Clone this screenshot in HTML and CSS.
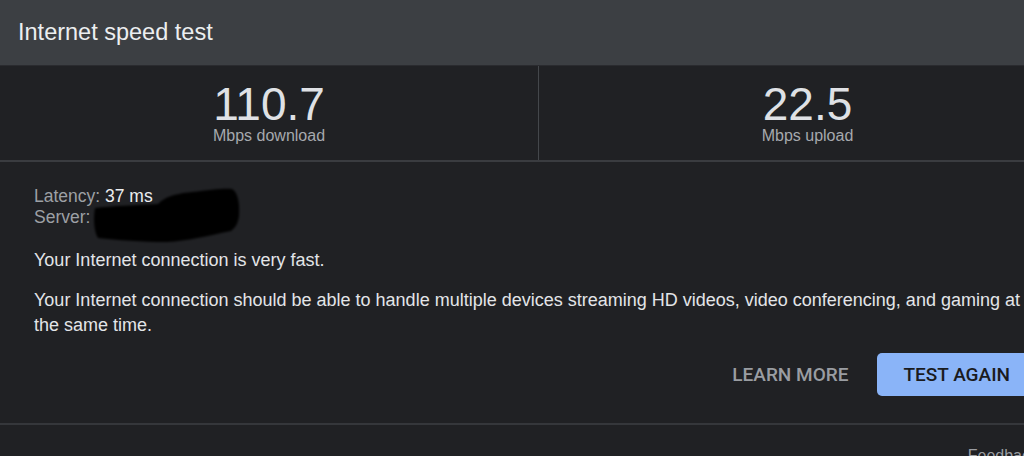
FILE: index.html
```html
<!DOCTYPE html>
<html lang="en">
<head>
<meta charset="utf-8">
<title>Internet speed test</title>
<link rel="stylesheet" href="styles.css">
</head>
<body>
<div class="card">
  <div class="header">Internet speed test</div>
  <div class="stats">
    <div class="stat">
      <div class="num">110.7</div>
      <div class="unit">Mbps download</div>
    </div>
    <div class="stat stat-right">
      <div class="num">22.5</div>
      <div class="unit">Mbps upload</div>
    </div>
  </div>
  <div class="details">
    <div class="meta">
      <div class="line"><span class="label">Latency:</span> <span class="value">37 ms</span></div>
      <div class="line"><span class="label">Server:</span></div>
      <svg class="redact" width="150" height="60" viewBox="0 0 150 60" aria-hidden="true">
        <defs><filter id="soft"><feGaussianBlur stdDeviation="1.2"/></filter></defs>
        <path filter="url(#soft)" fill="#060606" d="M3,22 C20,20 45,19 66,18 C72,12 80,8 100,6 C118,4 132,2 140,3 C146,6 148,18 147,30 C146,38 143,42 139,45 C115,50 95,55 75,56 C50,56 25,54 6,52 C2,46 1,32 3,22 Z"/>
      </svg>
    </div>
    <p class="text">Your Internet connection is very fast.</p>
    <p class="text">Your Internet connection should be able to handle multiple devices streaming HD videos, video conferencing, and gaming at the same time.</p>
    <div class="actions">
      <button class="btn btn-text">LEARN MORE</button>
      <button class="btn btn-primary">TEST AGAIN</button>
    </div>
  </div>
  <div class="footer">
    <span class="feedback">Feedback</span>
  </div>
</div>
</body>
</html>
```

FILE: styles.css
```css
html, body {
  margin: 0;
  padding: 0;
}
body {
  background: #202124;
  width: 1024px;
  height: 456px;
  overflow: hidden;
  font-family: "Liberation Sans", Arial, Helvetica, sans-serif;
  color: #e8eaed;
}
.card {
  width: 1076px;
}
.header {
  height: 65px;
  line-height: 65px;
  padding-left: 18px;
  background: #3c3f43;
  font-size: 23.5px;
  color: #eceef0;
}
.stats {
  display: grid;
  grid-template-columns: 538px 1fr;
  height: 94px;
  border-top: 1px solid #2a2b2f;
  border-bottom: 2px solid #3a3c40;
}
.stat {
  display: flex;
  flex-direction: column;
  align-items: center;
  padding-top: 15px;
}
.stat-right {
  border-left: 1px solid #44474b;
}
.num {
  font-size: 46px;
  line-height: 46px;
  color: #dfe1e5;
}
.unit {
  font-size: 16px;
  line-height: 17px;
  color: #a6a9ae;
}
.details {
  padding: 24px 40px 0 34px;
}
.meta {
  position: relative;
  font-size: 17.5px;
  line-height: 21px;
}
.label {
  color: #9da0a5;
}
.value {
  color: #eceef0;
}
.redact {
  position: absolute;
  left: 58px;
  top: 0;
}
.text {
  margin: 0;
  font-size: 18px;
  line-height: 25px;
  color: #e3e5e8;
}
.meta + .text {
  margin-top: 20px;
}
.text + .text {
  margin-top: 15px;
}
.actions {
  display: flex;
  justify-content: flex-end;
  align-items: center;
  gap: 4px;
  margin-top: 15px;
}
.btn {
  font-family: Roboto, "Liberation Sans", Arial, sans-serif;
  font-size: 19px;
  font-weight: 500;
  border: none;
  height: 43px;
  border-radius: 5px;
  padding: 0 25px;
  cursor: pointer;
}
.btn-text {
  background: transparent;
  color: #9a9da2;
}
.btn-primary {
  background: #8ab4f8;
  color: #1a1b1e;
  padding: 0 26px;
}
.footer {
  margin-top: 27px;
  border-top: 2px solid #35373b;
  display: flex;
  justify-content: flex-end;
  padding: 22px 38px 0 0;
}
.feedback {
  font-size: 16px;
  color: #9a9da2;
}
```
